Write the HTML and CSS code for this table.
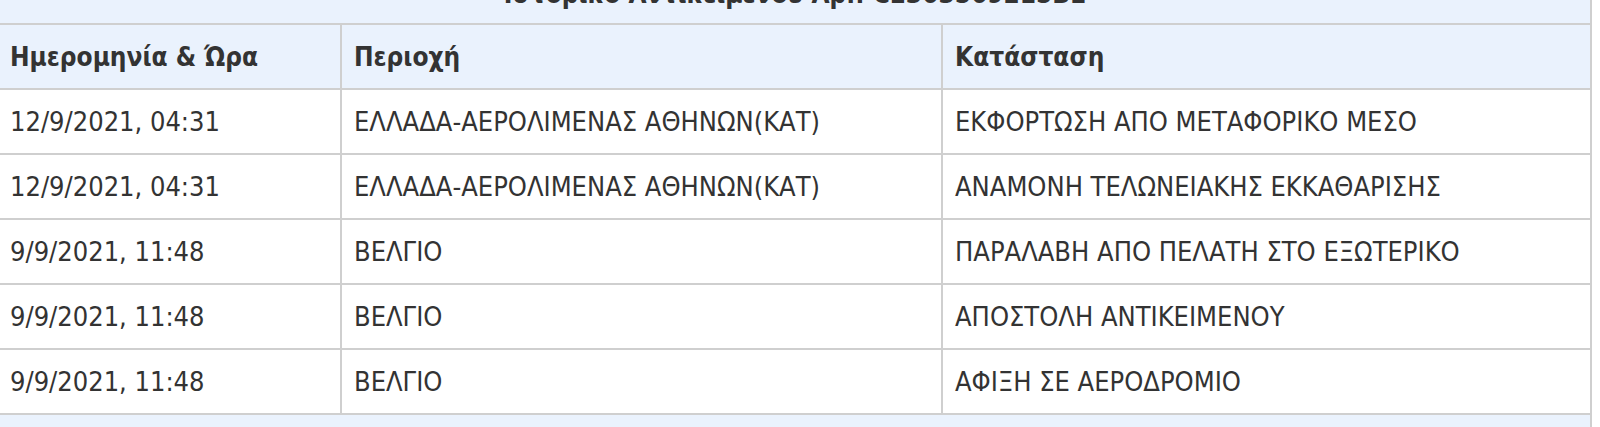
FILE: index.html
```html
<!DOCTYPE html>
<html lang="el">
<head>
<meta charset="utf-8">
<link rel="stylesheet" href="styles.css">
</head>
<body>
<div class="panel">
  <div class="title"><h2>Ιστορικό Αντικειμένου Αρ.: CE363569215BE</h2></div>
  <table class="track">
    <colgroup>
      <col class="c1"><col class="c2"><col class="c3">
    </colgroup>
    <thead>
      <tr><th>Ημερομηνία &amp; Ώρα</th><th>Περιοχή</th><th>Κατάσταση</th></tr>
    </thead>
    <tbody>
      <tr><td>12/9/2021, 04:31</td><td>ΕΛΛΑΔΑ-ΑΕΡΟΛΙΜΕΝΑΣ ΑΘΗΝΩΝ(ΚΑΤ)</td><td>ΕΚΦΟΡΤΩΣΗ ΑΠΟ ΜΕΤΑΦΟΡΙΚΟ ΜΕΣΟ</td></tr>
      <tr><td>12/9/2021, 04:31</td><td>ΕΛΛΑΔΑ-ΑΕΡΟΛΙΜΕΝΑΣ ΑΘΗΝΩΝ(ΚΑΤ)</td><td>ΑΝΑΜΟΝΗ ΤΕΛΩΝΕΙΑΚΗΣ ΕΚΚΑΘΑΡΙΣΗΣ</td></tr>
      <tr><td>9/9/2021, 11:48</td><td>ΒΕΛΓΙΟ</td><td>ΠΑΡΑΛΑΒΗ ΑΠΟ ΠΕΛΑΤΗ ΣΤΟ ΕΞΩΤΕΡΙΚΟ</td></tr>
      <tr><td>9/9/2021, 11:48</td><td>ΒΕΛΓΙΟ</td><td>ΑΠΟΣΤΟΛΗ ΑΝΤΙΚΕΙΜΕΝΟΥ</td></tr>
      <tr><td>9/9/2021, 11:48</td><td>ΒΕΛΓΙΟ</td><td>ΑΦΙΞΗ ΣΕ ΑΕΡΟΔΡΟΜΙΟ</td></tr>
    </tbody>
  </table>
</div>
</body>
</html>
```

FILE: styles.css
```css
html, body {
  margin: 0;
  padding: 0;
  background: #ffffff;
  overflow: hidden;
}
.panel {
  width: 1590px;
  height: 427px;
  background: #eaf2fd;
  border-right: 2px solid #cfcfcf;
  font-family: "DejaVu Sans Condensed", "DejaVu Sans", sans-serif;
  color: #333333;
}
.title {
  height: 23px;
  overflow: hidden;
  position: relative;
}
.title h2 {
  margin: 0;
  position: absolute;
  left: 0;
  right: 0;
  top: -21px;
  text-align: center;
  font-size: 26px;
  line-height: 30px;
  font-weight: bold;
  color: #333333;
}
.track {
  width: 1590px;
  table-layout: fixed;
  border-collapse: separate;
  border-spacing: 0;
  border-top: 2px solid #cfcfcf;
}
.c1 { width: 342px; }
.c2 { width: 601px; }
.c3 { width: 647px; }
.track th, .track td {
  height: 65px;
  padding: 0 0 0 12px;
  box-sizing: border-box;
  border-bottom: 2px solid #cfcfcf;
  border-right: 2px solid #cfcfcf;
  text-align: left;
  vertical-align: middle;
  white-space: nowrap;
}
.track th:first-child, .track td:first-child { padding-left: 10px; }
.track th:last-child, .track td:last-child { border-right: none; }
.track th {
  background: #eaf2fd;
  font-weight: bold;
  font-size: 26px;
}
.track td {
  background: #ffffff;
  font-weight: normal;
  font-size: 27px;
}
```
